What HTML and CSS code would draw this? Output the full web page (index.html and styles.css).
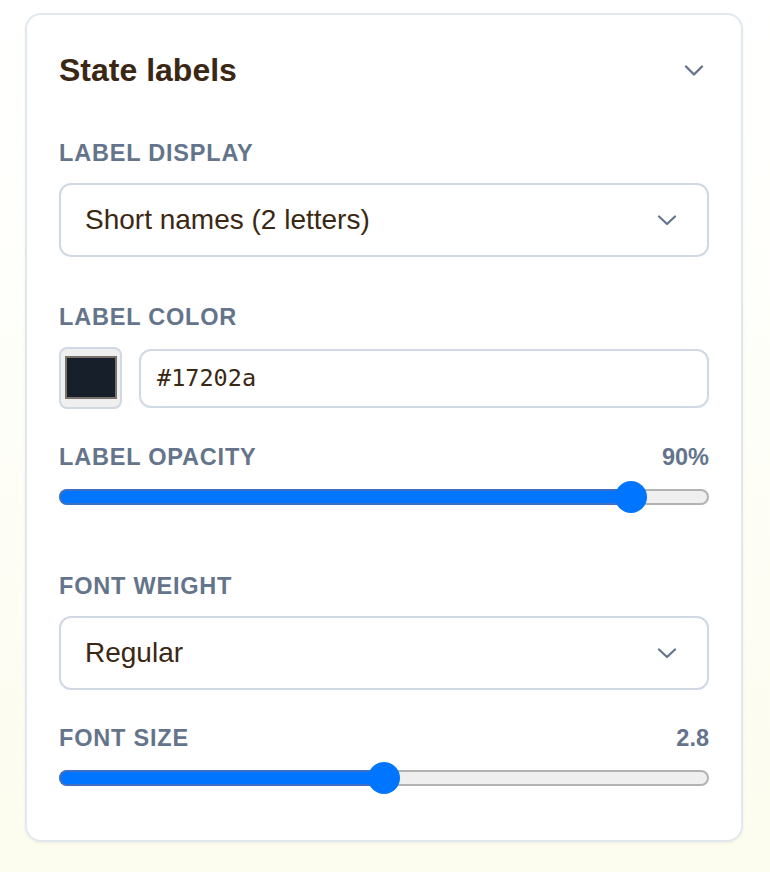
FILE: index.html
```html
<!DOCTYPE html>
<html lang="en">
<head>
<meta charset="utf-8">
<title>State labels</title>
<link rel="stylesheet" href="styles.css">
</head>
<body>
<section class="card">
  <header class="card-header">
    <h2 class="card-title">State labels</h2>
    <button class="collapse-btn" type="button" aria-label="Collapse">
      <svg width="20" height="11" viewBox="0 0 20 11"><path d="M2 1.5l8 8 8-8" fill="none" stroke="#64748b" stroke-width="2.4" stroke-linecap="round" stroke-linejoin="round"/></svg>
    </button>
  </header>

  <div class="fields">
    <div class="field field--display">
      <div class="field-label">Label display</div>
      <div class="select">
        <span class="select-value">Short names (2 letters)</span>
        <svg class="select-chevron" width="20" height="11" viewBox="0 0 20 11"><path d="M2 1.5l8 7.5 8-7.5" fill="none" stroke="#64748b" stroke-width="2.2" stroke-linecap="round" stroke-linejoin="round"/></svg>
      </div>
    </div>

    <div class="field">
      <div class="field-label">Label color</div>
      <div class="color-row">
        <div class="swatch"><div class="swatch-inner"></div></div>
        <div class="text-input">#17202a</div>
      </div>
    </div>

    <div class="field field--range">
      <div class="field-label field-label--row"><span>Label opacity</span><span class="field-value">90%</span></div>
      <div class="range">
        <div class="range-track"></div>
        <div class="range-fill" style="width: calc(16px + 0.9 * (100% - 32px))"></div>
        <div class="range-thumb" style="left: calc(0.9 * (100% - 32px))"></div>
      </div>
    </div>

    <div class="field">
      <div class="field-label">Font weight</div>
      <div class="select">
        <span class="select-value">Regular</span>
        <svg class="select-chevron" width="20" height="11" viewBox="0 0 20 11"><path d="M2 1.5l8 7.5 8-7.5" fill="none" stroke="#64748b" stroke-width="2.2" stroke-linecap="round" stroke-linejoin="round"/></svg>
      </div>
    </div>

    <div class="field">
      <div class="field-label field-label--row"><span>Font size</span><span class="field-value">2.8</span></div>
      <div class="range">
        <div class="range-track"></div>
        <div class="range-fill" style="width: calc(16px + 0.5 * (100% - 32px))"></div>
        <div class="range-thumb" style="left: calc(0.5 * (100% - 32px))"></div>
      </div>
    </div>
  </div>
</section>
</body>
</html>
```

FILE: styles.css
```css
* { box-sizing: border-box; }

html, body {
  margin: 0;
  height: 100%;
}

body {
  background: linear-gradient(180deg, #ffffff 0%, #fefef8 50%, #fcfcee 100%);
  font-family: "Liberation Sans", Arial, sans-serif;
  min-height: 872px;
  padding-top: 13px;
}

.card {
  margin-left: 25px;
  width: 718px;
  background: #ffffff;
  border: 2px solid #e2e8f0;
  border-radius: 16px;
  padding: 34px 32px 46px 32px;
  box-shadow: 0 1px 3px rgba(15, 23, 42, 0.06);
}

.card-header {
  display: flex;
  align-items: center;
  justify-content: space-between;
  height: 42px;
}

.card-title {
  margin: 0;
  font-size: 32px;
  font-weight: 700;
  color: #3b2814;
  line-height: 42px;
}

.collapse-btn {
  border: 0;
  background: none;
  padding: 0;
  margin-right: 5px;
  display: flex;
  align-items: center;
}

.fields {
  display: flex;
  flex-direction: column;
  gap: 34px;
  margin-top: 48px;
}

.field--display { margin-bottom: 12px; }
.field--range { margin-bottom: 25px; }

.field-label {
  font-size: 23.5px;
  line-height: 28px;
  font-weight: 700;
  color: #64748b;
  text-transform: uppercase;
  letter-spacing: 0.8px;
  margin-bottom: 16px;
}

.field-label--row {
  display: flex;
  justify-content: space-between;
  margin-bottom: 10px;
}

.field-value {
  letter-spacing: 0;
}

.select {
  height: 74px;
  border: 2px solid #cfd8e3;
  border-radius: 12px;
  display: flex;
  align-items: center;
  justify-content: space-between;
  padding: 0 30px 0 24px;
  background: #ffffff;
}

.select-value {
  font-size: 28px;
  color: #3b2814;
}

.color-row {
  display: flex;
  align-items: center;
  gap: 17px;
}

.swatch {
  width: 63px;
  height: 62px;
  flex: none;
  background: #efefef;
  border: 2px solid #cfd8e3;
  border-radius: 8px;
  padding: 7px 3px 8px 4px;
}

.swatch-inner {
  width: 100%;
  height: 100%;
  background: #17202a;
  border: 2px solid #7a726b;
}

.text-input {
  flex: 1;
  height: 59px;
  border: 2px solid #cfd8e3;
  border-radius: 12px;
  display: flex;
  align-items: center;
  padding-left: 16px;
  font-family: "DejaVu Sans Mono", "Liberation Mono", monospace;
  font-size: 23.5px;
  color: #3b2814;
}

.range {
  position: relative;
  height: 32px;
}

.range-track {
  position: absolute;
  left: 0;
  right: 0;
  top: 8px;
  height: 16px;
  background: #efefef;
  border: 2px solid #b3b3b3;
  border-radius: 8px;
}

.range-fill {
  position: absolute;
  left: 0;
  top: 8px;
  height: 16px;
  background: #0075ff;
  border: 2px solid #3f6fc4;
  border-right: 0;
  border-radius: 8px 0 0 8px;
}

.range-thumb {
  position: absolute;
  top: 0;
  width: 32px;
  height: 32px;
  border-radius: 50%;
  background: #0075ff;
}
```
